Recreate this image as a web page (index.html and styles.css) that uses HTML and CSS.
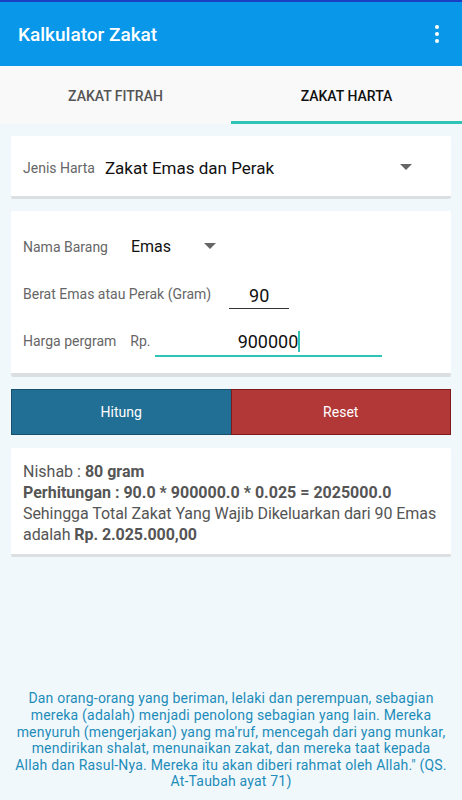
FILE: index.html
```html
<!DOCTYPE html>
<html>
    <head>
        <title>Kalkulator Zakat</title>
        <meta charset="UTF-8">
        <meta name="viewport" content="width=device-width">
        <link rel="stylesheet" href="styles.css">
    </head>
    <body>
        <div id="app">
            <header class="appbar">
                <span class="title">Kalkulator Zakat</span>
                <span class="menu"><i></i><i></i><i></i></span>
            </header>
            <nav class="tabs">
                <div class="tab">ZAKAT FITRAH</div>
                <div class="tab active">ZAKAT HARTA</div>
            </nav>

            <div class="content">
                <div class="card jenis">
                    <span class="label">Jenis Harta</span>
                    <span class="select-value big">Zakat Emas dan Perak</span>
                    <span class="arrow arrow-far"></span>
                </div>

                <div class="card form">
                    <div class="row">
                        <span class="label">Nama Barang</span>
                        <span class="select-value">Emas</span>
                        <span class="arrow"></span>
                    </div>
                    <div class="row">
                        <span class="label">Berat Emas atau Perak (Gram)</span>
                        <span class="field small">90</span>
                    </div>
                    <div class="row">
                        <span class="label">Harga pergram</span>
                        <span class="label rp">Rp.</span>
                        <span class="field wide">900000<b class="caret"></b></span>
                    </div>
                </div>

                <div class="buttons">
                    <div class="btn hitung">Hitung</div>
                    <div class="btn reset">Reset</div>
                </div>

                <div class="card result">
                    <div>Nishab : <b>80 gram</b></div>
                    <div><b>Perhitungan : 90.0 * 900000.0 * 0.025 = 2025000.0</b></div>
                    <div class="tight">Sehingga Total Zakat Yang Wajib Dikeluarkan dari 90 Emas adalah <b>Rp. 2.025.000,00</b></div>
                </div>
            </div>

            <p class="quote">Dan orang-orang yang beriman, lelaki dan perempuan, sebagian mereka (adalah) menjadi penolong sebagian yang lain. Mereka menyuruh (mengerjakan) yang ma'ruf, mencegah dari yang munkar, mendirikan shalat, menunaikan zakat, dan mereka taat kepada Allah dan Rasul-Nya. Mereka itu akan diberi rahmat oleh Allah." (QS. At-Taubah ayat 71)</p>
        </div>
    </body>
</html>
```

FILE: styles.css
```css
body{
    margin:0;
    font-family: Roboto, "Noto Sans", sans-serif;
    background-color:#f1f8fc;
}
#app{
    min-height:800px;
    display:flex;
    flex-direction:column;
}
.appbar{
    height:64px;
    border-top:2px solid #1b3fc4;
    background-color:#0897e9;
    display:flex;
    align-items:center;
    justify-content:space-between;
    padding:0 18px;
    color:white;
    box-shadow:0 1px 2px rgba(0,0,0,0.2);
}
.title{
    font-size:19px;
    font-weight:500;
}
.menu{
    display:flex;
    flex-direction:column;
    gap:3px;
    margin-right:5px;
}
.menu i{
    width:4px;
    height:4px;
    border-radius:50%;
    background:white;
}
.tabs{
    height:58px;
    display:flex;
    background-color:#f9f9f9;
}
.tab{
    flex:1;
    display:flex;
    align-items:center;
    justify-content:center;
    font-size:14px;
    font-weight:500;
    color:#555;
    box-sizing:border-box;
    padding-top:1px;
}
.tab.active{
    color:#111;
    border-bottom:3px solid #2ec4b6;
    padding-top:4px;
}
.content{
    padding:12px 11px;
    display:flex;
    flex-direction:column;
    gap:12px;
}
.card{
    background:white;
    border-bottom:3px solid #dcdfe1;
    border-radius:2px;
}
.label{
    font-size:14px;
    color:#666;
}
.jenis{
    height:63px;
    box-sizing:border-box;
    padding:4px 12px 0;
    display:flex;
    align-items:center;
}
.select-value{
    font-size:16px;
    color:#111;
    margin-left:23px;
}
.select-value.big{
    font-size:17px;
    margin-left:10px;
}
.arrow{
    width:0;
    height:0;
    border-left:6px solid transparent;
    border-right:6px solid transparent;
    border-top:6px solid #666;
    margin-left:33px;
    margin-top:-2px;
}
.arrow-far{
    margin-left:auto;
    margin-right:27px;
}
.form{
    height:166px;
    box-sizing:border-box;
    padding:12px 12px 0;
    border-bottom-width:4px;
}
.row{
    height:47px;
    display:flex;
    align-items:center;
}
.field{
    font-size:18px;
    color:#111;
    text-align:center;
    border-bottom:1px solid #333;
    padding-bottom:2px;
    margin-top:6px;
}
.small{
    width:60px;
    margin-left:18px;
}
.rp{
    margin-left:14px;
}
.wide{
    width:227px;
    margin-left:5px;
    border-bottom:2px solid #2ec4b6;
    padding-bottom:3px;
}
.caret{
    display:inline-block;
    width:2px;
    height:21px;
    background:#2ec4b6;
    vertical-align:-4px;
}
.buttons{
    display:flex;
    height:46px;
}
.btn{
    flex:1;
    display:flex;
    align-items:center;
    justify-content:center;
    font-size:14px;
    color:white;
    box-sizing:border-box;
}
.hitung{
    background:#226f95;
    border:1px solid #17516f;
    border-right:none;
}
.reset{
    background:#b23838;
    border:1px solid #7e1a1a;
}
.result{
    margin-top:1px;
    padding:13px 12px 9px;
    font-size:16px;
    line-height:21px;
    color:#555;
}
.result b{
    font-weight:bold;
}
.tight{
    letter-spacing:-0.07px;
}
.quote{
    margin:auto 0 0;
    padding:0 15px 10px;
    text-align:center;
    font-size:14px;
    letter-spacing:0.2px;
    line-height:16.6px;
    color:#1d8cb9;
}
```
